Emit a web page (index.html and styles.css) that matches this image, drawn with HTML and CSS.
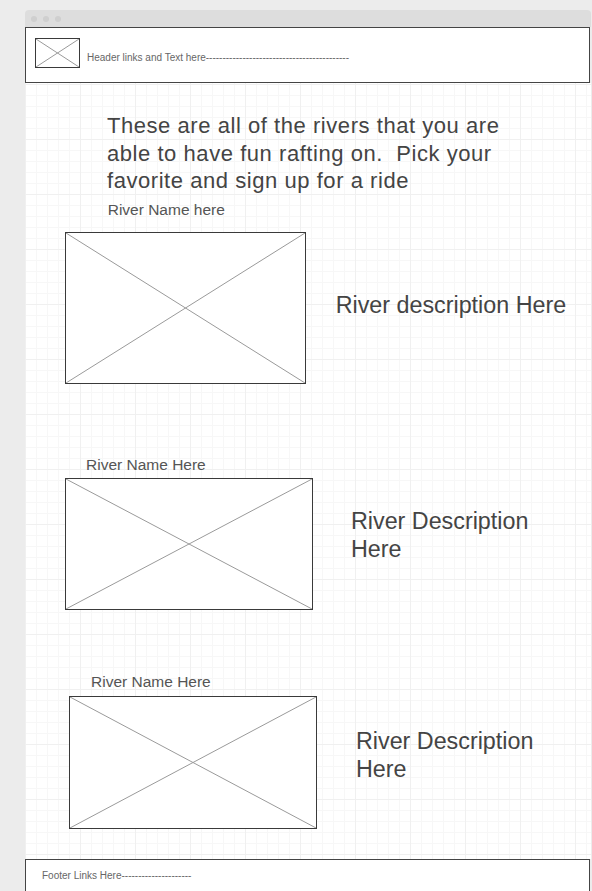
FILE: index.html
```html
<!DOCTYPE html>
<html>
<head>
<meta charset="utf-8">
<title>Rivers wireframe</title>
<link rel="stylesheet" href="styles.css">
</head>
<body>
<div class="window">
  <div class="titlebar">
    <span class="dot"></span><span class="dot"></span><span class="dot"></span>
  </div>
  <header class="header">
    <div class="ph ph-logo">
      <svg viewBox="0 0 100 100" preserveAspectRatio="none"><line x1="0" y1="0" x2="100" y2="100"/><line x1="100" y1="0" x2="0" y2="100"/></svg>
    </div>
    <div class="header-text">Header links and Text here-------------------------------------------</div>
  </header>
  <main class="canvas">
    <h1 class="intro">These are all of the rivers that you are<br>able to have fun rafting on.&nbsp; Pick your<br>favorite and sign up for a ride</h1>

    <section class="river river-1">
      <div class="river-name">River Name here</div>
      <div class="river-row">
        <div class="ph ph-river">
          <svg viewBox="0 0 100 100" preserveAspectRatio="none"><line x1="0" y1="0" x2="100" y2="100"/><line x1="100" y1="0" x2="0" y2="100"/></svg>
        </div>
        <div class="river-desc">River description Here</div>
      </div>
    </section>

    <section class="river river-2">
      <div class="river-name">River Name Here</div>
      <div class="river-row">
        <div class="ph ph-river">
          <svg viewBox="0 0 100 100" preserveAspectRatio="none"><line x1="0" y1="0" x2="100" y2="100"/><line x1="100" y1="0" x2="0" y2="100"/></svg>
        </div>
        <div class="river-desc">River Description<br>Here</div>
      </div>
    </section>

    <section class="river river-3">
      <div class="river-name">River Name Here</div>
      <div class="river-row">
        <div class="ph ph-river">
          <svg viewBox="0 0 100 100" preserveAspectRatio="none"><line x1="0" y1="0" x2="100" y2="100"/><line x1="100" y1="0" x2="0" y2="100"/></svg>
        </div>
        <div class="river-desc">River Description<br>Here</div>
      </div>
    </section>
  </main>
  <footer class="footer">
    <div class="footer-text">Footer Links Here---------------------</div>
  </footer>
</div>
</body>
</html>
```

FILE: styles.css
```css
html, body {
  margin: 0;
  padding: 0;
}

body {
  background: #ececec;
  font-family: "Liberation Sans", Arial, sans-serif;
  color: #444;
  height: 891px;
  overflow: hidden;
}

.window {
  margin: 10px 0 0 25px;
  width: 566px;
  display: flex;
  flex-direction: column;
}

.titlebar {
  height: 17px;
  background: #dddddd;
  border-radius: 4px 4px 0 0;
  display: flex;
  align-items: center;
  gap: 6px;
  padding-left: 6px;
  box-sizing: border-box;
}

.dot {
  width: 6px;
  height: 6px;
  border-radius: 50%;
  background: #cfcfcf;
}

.header {
  height: 56px;
  width: 565px;
  box-sizing: border-box;
  border: 1px solid #444;
  background: #fff;
  display: flex;
  align-items: flex-start;
  padding: 10px 0 0 9px;
}

.ph {
  box-sizing: border-box;
  border: 1px solid #3a3a3a;
  background: #fff;
  flex: none;
}

.ph svg {
  display: block;
  width: 100%;
  height: 100%;
}

.ph line {
  stroke: #9a9a9a;
  stroke-width: 1;
  vector-effect: non-scaling-stroke;
}

.ph-logo {
  width: 45px;
  height: 30px;
}

.header-text {
  margin: 14px 0 0 7px;
  font-size: 10px;
  line-height: 12px;
  color: #666;
  white-space: nowrap;
}

.canvas {
  height: 776px;
  box-sizing: border-box;
  background-color: #fff;
  background-image:
    linear-gradient(to right, #f0f0f0 1px, transparent 1px),
    linear-gradient(to bottom, #f0f0f0 1px, transparent 1px),
    linear-gradient(to right, #f7f7f7 1px, transparent 1px),
    linear-gradient(to bottom, #f7f7f7 1px, transparent 1px);
  background-size: 55px 55px, 55px 55px, 11px 11px, 11px 11px;
  background-position: 0 1px, 0 1px, 0 1px, 0 1px;
  padding-top: 29.4px;
  display: flex;
  flex-direction: column;
}

.intro {
  margin: 0 0 0 82px;
  font-weight: normal;
  font-size: 22px;
  line-height: 27.3px;
  letter-spacing: 0.55px;
  color: #444;
  white-space: nowrap;
}

.river-name {
  font-size: 15.5px;
  line-height: 18px;
  color: #555;
  white-space: nowrap;
}

.river-row {
  display: flex;
  align-items: flex-start;
}

.river-desc {
  font-size: 23.3px;
  line-height: 28px;
  color: #444;
  white-space: nowrap;
}

.river-1 {
  margin-top: 6.3px;
}
.river-1 .river-name {
  margin-left: 82.7px;
}
.river-1 .river-row {
  margin-top: 13.4px;
  padding-left: 40px;
}
.river-1 .ph-river {
  width: 241px;
  height: 152px;
}
.river-1 .river-desc {
  margin: 59.3px 0 0 29.7px;
}

.river-2 {
  margin-top: 71.6px;
}
.river-2 .river-name {
  margin-left: 61px;
}
.river-2 .river-row {
  margin-top: 4.7px;
  padding-left: 40px;
}
.river-2 .ph-river {
  width: 248px;
  height: 132px;
}
.river-2 .river-desc {
  margin: 28.7px 0 0 38px;
}

.river-3 {
  margin-top: 63px;
}
.river-3 .river-name {
  margin-left: 66px;
}
.river-3 .river-row {
  margin-top: 5px;
  padding-left: 44px;
}
.river-3 .ph-river {
  width: 248px;
  height: 133px;
}
.river-3 .river-desc {
  margin: 30.7px 0 0 39px;
}

.footer {
  height: 32px;
  width: 565px;
  box-sizing: border-box;
  border: 1px solid #444;
  border-bottom: none;
  background: #fff;
  padding: 9.5px 0 0 16px;
}

.footer-text {
  font-size: 10px;
  line-height: 12px;
  color: #666;
  white-space: nowrap;
}
```
